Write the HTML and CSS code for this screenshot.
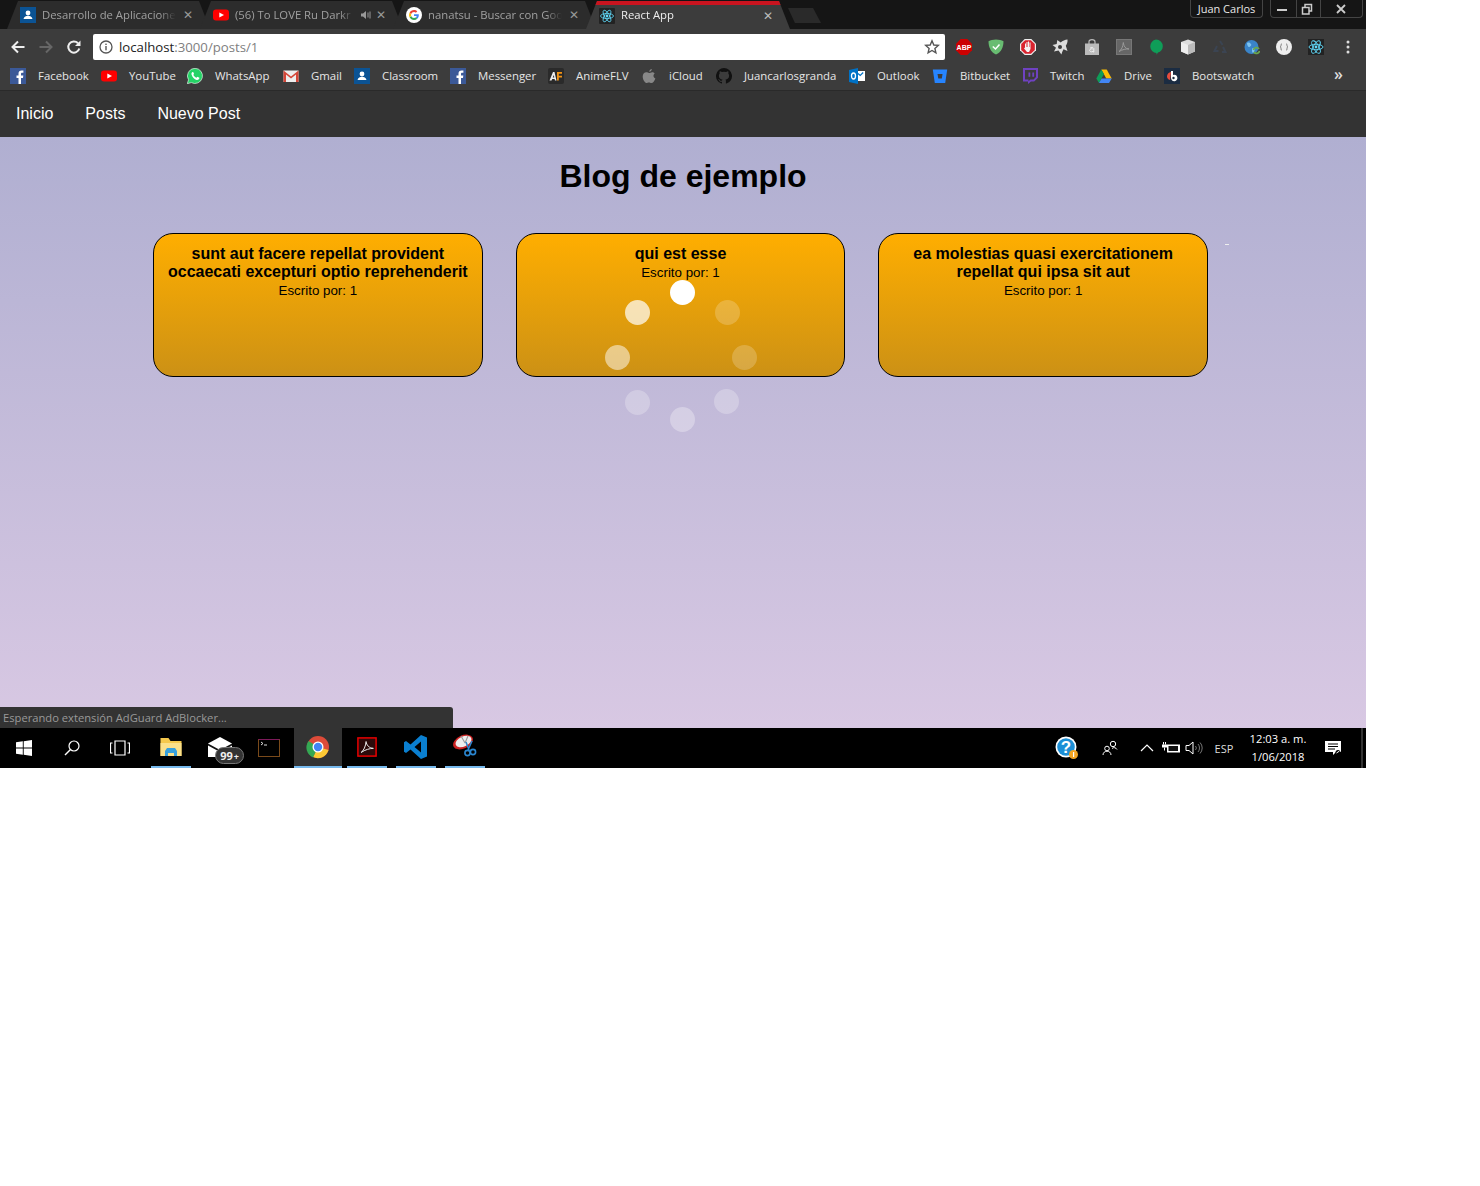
FILE: index.html
```html
<!DOCTYPE html>
<html lang="es">
<head>
<meta charset="utf-8">
<title>React App</title>
<link rel="stylesheet" href="styles.css">
</head>
<body>
<div class="screen">
  <header class="chrome">
    <div class="tabstrip">
      <div class="tabs">
        <div class="tab">
          <svg class="ico" viewBox="0 0 16 16"><rect width="16" height="16" fill="#0b5394"/><circle cx="8" cy="6" r="2.400" fill="#fff"/><path d="M3.500 12c.5-2.500 2.500-3.300 4.500-3.300s4 .8 4.500 3.300z" fill="#fff"/></svg>
          <span class="tab-title">Desarrollo de Aplicacione</span>
          <span class="tab-x">✕</span>
        </div>
        <div class="tab">
          <svg class="ico" viewBox="0 0 16 16"><rect y="2.500" width="16" height="11" rx="3" fill="#f00"/><path d="M6.300 5.500v5L11 8z" fill="#fff"/></svg>
          <span class="tab-title">(56) To LOVE Ru Darkr</span>
          <svg class="tab-sound" viewBox="0 0 12 12"><path d="M1 4.500h2L6 2v8L3 7.500H1z" fill="#999"/><path d="M8 3.500v5M10 2.500v7" stroke="#999" fill="none"/></svg>
          <span class="tab-x">✕</span>
        </div>
        <div class="tab">
          <svg class="ico" viewBox="0 0 16 16"><circle cx="8" cy="8" r="8" fill="#fff"/><path d="M12.800 8.200c0-.4 0-.7-.1-1H8v1.900h2.700c-.1.700-.5 1.200-1 1.500l1.600 1.200c.9-.9 1.500-2.100 1.500-3.600z" fill="#4285f4"/><path d="M8 13c1.300 0 2.400-.4 3.300-1.200l-1.600-1.200c-.4.300-1 .5-1.700.5-1.300 0-2.400-.9-2.800-2L3.600 10.300C4.400 11.900 6.100 13 8 13z" fill="#34a853"/><path d="M5.200 9.100c-.2-.7-.2-1.500 0-2.200L3.600 5.700c-.7 1.400-.7 3.200 0 4.600z" fill="#fbbc05"/><path d="M8 5c.7 0 1.400.3 1.900.7l1.400-1.400C10.400 3.500 9.300 3 8 3 6.100 3 4.400 4.100 3.600 5.700l1.600 1.200C5.600 5.800 6.700 5 8 5z" fill="#ea4335"/></svg>
          <span class="tab-title">nanatsu - Buscar con Goo</span>
          <span class="tab-x">✕</span>
        </div>
        <div class="tab tab-active">
          <svg class="ico" viewBox="0 0 16 16"><rect width="16" height="16" rx="1" fill="#222"/><circle cx="8" cy="8" r="1.400" fill="#61dafb"/><g fill="none" stroke="#61dafb" stroke-width=".8"><ellipse cx="8" cy="8" rx="6.500" ry="2.500"/><ellipse cx="8" cy="8" rx="6.500" ry="2.500" transform="rotate(60 8 8)"/><ellipse cx="8" cy="8" rx="6.500" ry="2.500" transform="rotate(120 8 8)"/></g></svg>
          <span class="tab-title">React App</span>
          <span class="tab-x">✕</span>
        </div>
        <div class="newtab"></div>
      </div>
      <div class="winbar">
        <div class="profile">Juan Carlos</div>
        <div class="winctl">
          <span class="wbtn"><svg viewBox="0 0 12 12" class="wico"><rect x="1" y="6" width="10" height="2" fill="#ccc"/></svg></span>
          <span class="wbtn wbtn-mid"><svg viewBox="0 0 12 12" class="wico"><path d="M1.500 4.500h6.500v6.500h-6.500zM4 4.500v-3h6.500v6.500h-2.500" fill="none" stroke="#ccc" stroke-width="1.500"/></svg></span>
          <span class="wbtn wbtn-close"><svg viewBox="0 0 12 12" class="wico"><path d="M2 2l8 8M10 2l-8 8" stroke="#ccc" stroke-width="1.800"/></svg></span>
        </div>
      </div>
    </div>

    <div class="toolbar">
      <svg class="navi" viewBox="0 0 16 16"><path d="M14.500 8H2.500M8 2.500L2.500 8 8 13.500" fill="none" stroke="#eee" stroke-width="2"/></svg>
      <svg class="navi" viewBox="0 0 16 16"><path d="M1.500 8h12M8 2.500L13.500 8 8 13.500" fill="none" stroke="#666" stroke-width="2"/></svg>
      <svg class="navi" viewBox="0 0 16 16"><path d="M13.300 9.500A5.600 5.600 0 1 1 12 4.200" fill="none" stroke="#eee" stroke-width="2"/><path d="M14.500 1.500v5.500H9z" fill="#eee"/></svg>
      <div class="omnibox">
        <svg class="info" viewBox="0 0 14 14"><circle cx="7" cy="7" r="6" fill="none" stroke="#555" stroke-width="1.300"/><rect x="6.300" y="6" width="1.400" height="4.300" fill="#555"/><rect x="6.300" y="3.600" width="1.400" height="1.400" fill="#555"/></svg>
        <span class="url"><span class="url-host">localhost</span><span class="url-rest">:3000/posts/1</span></span>
        <svg class="star" viewBox="0 0 16 16"><path d="M8 1.800l1.800 4.200 4.500.4-3.400 3 1 4.400L8 11.500l-3.900 2.300 1-4.400-3.400-3 4.500-.4z" fill="none" stroke="#555" stroke-width="1.400"/></svg>
      </div>
      <div class="exts">
        <span class="ext"><svg viewBox="0 0 16 16"><path d="M4.700 0h6.600L16 4.700v6.600L11.300 16H4.700L0 11.300V4.700z" fill="#c00"/><text x="8" y="10.700" class="abp">ABP</text></svg></span>
        <span class="ext"><svg viewBox="0 0 16 16"><path d="M8 .5C5 .5 2.500 1.200.5 2.300.5 8 2.500 13 8 15.500c5.500-2.500 7.500-7.500 7.500-13.200C13.500 1.200 11 .5 8 .5z" fill="#68bc71"/><path d="M4.800 7.500L7.500 10l4-4.500" fill="none" stroke="#fff" stroke-width="1.500"/></svg></span>
        <span class="ext"><svg viewBox="0 0 16 16"><path d="M4.700 0h6.600L16 4.700v6.600L11.300 16H4.700L0 11.300V4.700z" fill="#eee"/><path d="M5.100 1.200h5.800l3.900 3.900v5.800l-3.900 3.900H5.100l-3.900-3.900V5.100z" fill="#d9232e"/><path d="M5 8.500V4.500h1V8h.5V3h1v5H8V2.500h1V8h.5V3.500h1V10l-1.500 3H7L4 9.500l.7-.8z" fill="#f3f3f3"/></svg></span>
        <span class="ext"><svg viewBox="0 0 16 16"><path d="M15.500 .5c.3 2.700-.6 4.700-1.700 6.300l1.700 5.200-4-1.700c-.9 1.600-1.600 3.200-2.100 5.200L6.500 11.500l-4.500 1 2-3.700L.5 6l4.200-.9L5.300 1l3.400 2.400C10.700 1.700 13 .8 15.500 .5z" fill="#ddd"/><circle cx="8" cy="8" r="2" fill="#3c3c3c"/></svg></span>
        <span class="ext"><svg viewBox="0 0 16 16"><path d="M1 4.500h14v11.500H1z" fill="#bbb"/><path d="M5 5V2.800a3 2.200 0 0 1 6 0V5" fill="none" stroke="#bbb" stroke-width="1.200"/><path d="M6 9.200a2.100 1.300 0 0 1 3.800.3V13h-.8v-.6a2 1.500 0 1 1-.3-2.400" fill="none" stroke="#eee"/></svg></span>
        <span class="ext"><svg viewBox="0 0 16 16"><rect x=".5" y=".5" width="15" height="15" fill="#666" stroke="#777"/><path d="M3 12.500c2.500-1.500 4-5 4.300-9 .5 4 2 6.300 5.700 6.500-3-.3-6.500.5-10 2.500z" fill="none" stroke="#999"/></svg></span>
        <span class="ext"><svg viewBox="0 0 16 16"><path d="M8 .5a6.800 6.800 0 0 1 6.800 6.800c0 3.200-2 5.500-4.800 6.300l-1.500 2.200V14A6.800 6.800 0 0 1 8 .5z" fill="#0f9d58"/></svg></span>
        <span class="ext"><svg viewBox="0 0 16 16"><path d="M8 .5l7 2.500v9.500L8 15.500 1 12.500V3z" fill="#ddd"/><path d="M8 6L1 3v9.500l7 3z" fill="#eee"/><path d="M8 6l7-3v9.500l-7 3z" fill="#bbb"/></svg></span>
        <span class="ext"><svg viewBox="0 0 16 16"><path d="M8 2l2.500 4M5 7L2.500 12h4M10 13h3.500L11 8" fill="none" stroke="#3b4452" stroke-width="2"/></svg></span>
        <span class="ext"><svg viewBox="0 0 16 16"><circle cx="7.500" cy="8" r="7" fill="#3a84c9"/><path d="M3 4c2-1 3 0 4 1s-1 3-2 3-2-2-2-4zM9 9c2 0 2 2 1 4s-2 0-2-1 0-3 1-3z" fill="#7fc4f0"/><path d="M9.500 11a3 3 0 0 1 5.500-1M15.500 12a3 3 0 0 1-5.500 1" fill="none" stroke="#6aa84f" stroke-width="1.700"/></svg></span>
        <span class="ext"><svg viewBox="0 0 16 16"><circle cx="8" cy="8" r="8" fill="#eee"/><path d="M6 5c-1 0-1 .5-1 1.500S4 8 4 8s1 0 1 1.500.1 1.500 1 1.500M10 5c1 0 1 .5 1 1.500S12 8 12 8s-1 0-1 1.500-.1 1.500-1 1.500" fill="none" stroke="#777"/></svg></span>
        <span class="ext"><svg viewBox="0 0 16 16"><rect width="16" height="16" fill="#222"/><circle cx="8" cy="8" r="1.400" fill="#61dafb"/><g fill="none" stroke="#61dafb" stroke-width=".9"><ellipse cx="8" cy="8" rx="7" ry="2.700"/><ellipse cx="8" cy="8" rx="7" ry="2.700" transform="rotate(60 8 8)"/><ellipse cx="8" cy="8" rx="7" ry="2.700" transform="rotate(120 8 8)"/></g></svg></span>
        <span class="ext"><svg viewBox="0 0 16 16"><circle cx="8" cy="3" r="1.500" fill="#ddd"/><circle cx="8" cy="8" r="1.500" fill="#ddd"/><circle cx="8" cy="13" r="1.500" fill="#ddd"/></svg></span>
      </div>
    </div>

    <div class="bookmarks">
      <a class="bm"><svg viewBox="0 0 16 16"><rect width="16" height="16" fill="#3b5998"/><path d="M11 16V10h2l.3-2.500H11V6c0-.8.300-1.200 1.200-1.200h1.200V2.600c-.6-.1-1.200-.1-1.800-.1-1.900 0-3.100 1.100-3.100 3.200v1.800H6.500V10h2v6z" fill="#fff"/></svg><span>Facebook</span></a>
      <a class="bm"><svg viewBox="0 0 16 16"><rect y="2.500" width="16" height="11" rx="3" fill="#f00"/><path d="M6.300 5.500v5L11 8z" fill="#fff"/></svg><span>YouTube</span></a>
      <a class="bm"><svg viewBox="0 0 16 16"><path d="M8 .3a7.600 7.600 0 0 0-6.500 11.500L.3 15.700l4-1.100A7.600 7.600 0 1 0 8 .3z" fill="#25d366" stroke="#fff" stroke-width=".6"/><path d="M5.500 4c-.8.500-1.300 1.500-.9 2.800.7 2.400 2.700 4.500 5 5.100 1.300.3 2.400-.3 2.700-1.300l.1-.8-2-1-.9 1C8 9.300 6.900 8.200 6.300 6.800l.8-.9-.9-2z" fill="#fff"/></svg><span>WhatsApp</span></a>
      <a class="bm"><svg viewBox="0 0 16 16"><rect x=".5" y="2.500" width="15" height="11.500" fill="#eee"/><path d="M.5 2.500L8 8.500l7.500-6V14h-2.500V6.500L8 10.500 3 6.500V14H.5z" fill="#d44638"/></svg><span>Gmail</span></a>
      <a class="bm"><svg viewBox="0 0 16 16"><rect width="16" height="16" fill="#0b5394"/><circle cx="8" cy="6" r="2.400" fill="#fff"/><path d="M3.500 12c.5-2.500 2.500-3.300 4.500-3.300s4 .8 4.500 3.300z" fill="#fff"/></svg><span>Classroom</span></a>
      <a class="bm"><svg viewBox="0 0 16 16"><rect width="16" height="16" fill="#3b5998"/><path d="M11 16V10h2l.3-2.500H11V6c0-.8.300-1.200 1.200-1.200h1.200V2.600c-.6-.1-1.200-.1-1.800-.1-1.900 0-3.100 1.100-3.100 3.200v1.800H6.500V10h2v6z" fill="#fff"/></svg><span>Messenger</span></a>
      <a class="bm"><svg viewBox="0 0 16 16"><rect width="16" height="16" rx="2" fill="#2a2a2a"/><path d="M1.500 12.500L5 4h1.500l2 8.500H7L6.600 11H4.200l-.6 1.500zM4.700 9.500h1.600L5.800 7z" fill="#eee"/><path d="M9 4h5v1.800h-3.200v2H14v1.700h-3.200v3H9z" fill="#f29314"/></svg><span>AnimeFLV</span></a>
      <a class="bm"><svg viewBox="0 0 16 16"><path d="M10.800 1c.1 1.400-1.100 2.800-2.500 2.700C8.100 2.400 9.500 1.100 10.800 1zM13.700 5.500c-1.900 1.300-1.500 4.100.7 5-1 2.400-2.300 4.500-4 4.500-1 0-1.400-.6-2.500-.6s-1.600.6-2.500.6C3.700 15 1.700 11.400 1.700 8.600c0-2.800 1.800-4.300 3.600-4.300 1.100 0 2 .7 2.800.7s1.800-.8 3.100-.8c1 0 1.900.5 2.500 1.300z" fill="#888"/></svg><span>iCloud</span></a>
      <a class="bm"><svg viewBox="0 0 16 16"><path d="M8 0a8 8 0 0 0-2.500 15.600c.4.100.5-.2.500-.4v-1.400c-2.200.5-2.700-1-2.700-1-.4-.9-.9-1.200-.9-1.200-.7-.5.100-.5.100-.5.800.1 1.200.8 1.200.8.700 1.200 1.900.9 2.300.7.100-.5.300-.9.500-1.100-1.800-.2-3.600-.9-3.600-4 0-.9.300-1.600.8-2.100-.1-.2-.4-1 .1-2.100 0 0 .7-.2 2.200.8a7.600 7.600 0 0 1 4 0c1.500-1 2.200-.8 2.200-.8.400 1.100.2 1.900.1 2.100.5.600.8 1.300.8 2.100 0 3.100-1.900 3.800-3.700 4 .3.300.5.800.5 1.500v2.200c0 .2.100.5.600.4A8 8 0 0 0 8 0z" fill="#111"/></svg><span>Juancarlosgranda</span></a>
      <a class="bm"><svg viewBox="0 0 16 16"><rect x="7" y="3" width="9" height="10" fill="#fff"/><path d="M9 5.500l2.200 2 3-3" fill="none" stroke="#0072c6" stroke-width="1.200"/><path d="M0 2l9-2v16L0 14z" fill="#0072c6"/><ellipse cx="4.500" cy="8" rx="2" ry="3" fill="none" stroke="#fff" stroke-width="1.300"/></svg><span>Outlook</span></a>
      <a class="bm"><svg viewBox="0 0 16 16"><path d="M.8 1.500h14.400L13.200 15H2.800z" fill="#2684ff"/><path d="M5.500 6h5l-.7 4.500H6.300z" fill="#3c3c3c"/></svg><span>Bitbucket</span></a>
      <a class="bm"><svg viewBox="0 0 16 16"><path d="M1 0h15v9.800L12.200 13.500H9L6 16v-2.500H1z" fill="#6f42c1"/><path d="M3 2h11v7l-2.500 2.500H8.300L6.500 13.200v-1.700H3z" fill="#3c3c3c"/><path d="M6.500 4.500h1.800v4.300H6.500zM10.300 4.500h1.800v4.300h-1.800z" fill="#6f42c1"/></svg><span>Twitch</span></a>
      <a class="bm"><svg viewBox="0 0 16 16"><path d="M5.300 1.500h5.400l5 9h-5.400z" fill="#fbbc05"/><path d="M5.300 1.500L.3 10.500l2.700 4.500 5-9z" fill="#0f9d58"/><path d="M3 15h10l2.700-4.500H5.600z" fill="#4285f4"/></svg><span>Drive</span></a>
      <a class="bm"><svg viewBox="0 0 16 16"><rect width="16" height="16" fill="#1b2c42"/><path d="M3 8a5 5 0 0 1 4-4l-1 8a4 4 0 0 1-3-4z" fill="#e74c3c"/><path d="M7 3h2v4a3.200 3.200 0 1 1-2 3z" fill="#fff"/><circle cx="9.500" cy="10" r="1.200" fill="#1b2c42"/></svg><span>Bootswatch</span></a>
      <span class="bm-more">»</span>
    </div>
  </header>

  <nav class="appnav">
    <a class="navlink">Inicio</a>
    <a class="navlink">Posts</a>
    <a class="navlink">Nuevo Post</a>
  </nav>

  <main class="page">
    <h1 class="page-title">Blog de ejemplo</h1>
    <section class="cards">
      <article class="card">
        <h2 class="card-title">sunt aut facere repellat provident occaecati excepturi optio reprehenderit</h2>
        <p class="card-by">Escrito por: 1</p>
      </article>
      <article class="card">
        <h2 class="card-title">qui est esse</h2>
        <p class="card-by">Escrito por: 1</p>
      </article>
      <article class="card">
        <h2 class="card-title">ea molestias quasi exercitationem repellat qui ipsa sit aut</h2>
        <p class="card-by">Escrito por: 1</p>
      </article>
    </section>
    <div class="speck"></div>
    <div class="spinner">
      <i class="dot d1"></i><i class="dot d2"></i><i class="dot d3"></i><i class="dot d4"></i>
      <i class="dot d5"></i><i class="dot d6"></i><i class="dot d7"></i><i class="dot d8"></i>
    </div>
    <div class="status">Esperando extensión AdGuard AdBlocker...</div>
  </main>

  <footer class="taskbar">
    <div class="task-left">
      <span class="tb tb-48"><svg viewBox="0 0 16 16" class="tbi16"><path d="M0 2.300l6.800-1v6.300H0zM7.700 1.200L16 0v7.600H7.700zM0 8.500h6.800v6.300L0 13.800zM7.700 8.500H16V16l-8.300-1.200z" fill="#fff"/></svg></span>
      <span class="tb tb-48"><svg viewBox="0 0 16 16" class="tbi16"><circle cx="10" cy="6" r="5" fill="none" stroke="#fff" stroke-width="1.200"/><path d="M6.500 9.500L1 15" stroke="#fff" stroke-width="1.400"/></svg></span>
      <span class="tb tb-48"><svg viewBox="0 0 20 16" class="tbi20"><path d="M5 1h10v14H5zM2.500 3H.5v10h2M17.500 3h2v10h-2" fill="none" stroke="#fff" stroke-width="1.200"/></svg></span>
      <span class="tb tb-40 tb-open tb-explorer"><svg viewBox="0 0 22 20" class="tbi22"><path d="M.5 1h8l2 3h11v15H.5z" fill="#f5c84c"/><path d="M.5 6h21v13H.5z" fill="#fbe08a"/><path d="M5 19v-5l2-3h8l2 3v5h-3v-3H8v3z" fill="#38a0dc"/></svg></span>
      <span class="tb tb-mail"><svg viewBox="0 0 24 20" class="tbi-mail"><path d="M0 6.500L12 0l12 6.500V20H0z" fill="#fff"/><path d="M0 6.500l12 6.500 12-6.500v2L12 15 0 8.500z" fill="#111"/></svg><span class="badge">99<small>+</small></span></span>
      <span class="tb tb-term"><svg viewBox="0 0 22 18" class="tbi22"><rect x=".5" y=".5" width="21" height="17" fill="#000" stroke="#7a4a1a"/><path d="M.5 .5h21" stroke="#7d1a5a"/><path d="M3 3l2 1.500-2 1.500M6 6h3" stroke="#ddd" fill="none"/></svg></span>
      <span class="tb tb-48 tb-active"><svg viewBox="0 0 24 24" class="tbi24"><circle cx="12" cy="12" r="11" fill="#dd4b39"/><path d="M12 12L22.500 15A11 11 0 0 1 7 22z" fill="#fcc934"/><path d="M12 12L7 22.500A11 11 0 0 1 2.500 6z" fill="#34a853"/><circle cx="12" cy="12" r="5.500" fill="#fff"/><circle cx="12" cy="12" r="4.200" fill="#4285f4"/></svg></span>
      <span class="tb tb-40 tb-open tb-acro"><svg viewBox="0 0 22 22" class="tbi22"><rect x="1" y="1" width="20" height="20" fill="#2b0a0a" stroke="#e00" stroke-width="1.600"/><path d="M4.500 17c3-2 5-7 5.500-12 .5 4 3 7 8 7.500-4 0-9 1.500-13.500 4.500z" fill="none" stroke="#eee" stroke-width="1.100"/></svg></span>
      <span class="tb tb-40 tb-open tb-code"><svg viewBox="0 0 24 24" class="tbi24"><path d="M17 0l6 2.500v19L17 24 6.500 14.500 2 18l-2-1.200V7.200L2 6l4.500 3.500zM17 6.500L10.500 12l6.500 5.500z" fill="#0a7fd0"/></svg></span>
      <span class="tb tb-40 tb-open tb-snip"><svg viewBox="0 0 26 24" class="tbi-snip"><ellipse cx="11" cy="9" rx="10.500" ry="6.500" fill="#c22" transform="rotate(-25 11 9)"/><ellipse cx="11.500" cy="8.500" rx="8.500" ry="5" fill="#eee" transform="rotate(-25 11.500 8.500)"/><path d="M9 3l4 7M16 3l-3 7" stroke="#999" stroke-width="1.100"/><path d="M14 9l3 8M20 8l-4 9" stroke="#2a86d0" stroke-width="1.500"/><circle cx="15.500" cy="20" r="2.600" fill="none" stroke="#2a86d0" stroke-width="1.600"/><circle cx="21" cy="19" r="2.600" fill="none" stroke="#2a86d0" stroke-width="1.600"/></svg></span>
    </div>
    <div class="tray">
      <span class="tr tr-help"><svg viewBox="0 0 24 24" class="tri22"><circle cx="11" cy="11" r="10.500" fill="#fff"/><circle cx="11" cy="11" r="8.800" fill="#1c8fd6"/><text x="11" y="17" class="qmark">?</text><circle cx="18.500" cy="18.500" r="4.500" fill="#f5a623"/><rect x="18" y="16" width="1.200" height="5" fill="#fff"/></svg></span>
      <span class="tr tr-people"><svg viewBox="0 0 16 16" class="tri16"><circle cx="11" cy="4" r="2.700" fill="none" stroke="#fff"/><circle cx="5" cy="8.500" r="2.300" fill="none" stroke="#fff"/><path d="M1 15c0-2.500 2-3.800 4-3.800s4 1.300 4 3.800M10 8.500c1.500-1.500 4-1 5 1" fill="none" stroke="#fff"/></svg></span>
      <span class="tr tr-up"><svg viewBox="0 0 14 8" class="tri-up"><path d="M1 7l6-6 6 6" fill="none" stroke="#fff" stroke-width="1.200"/></svg></span>
      <span class="tr tr-batt"><svg viewBox="0 0 18 14" class="tri18"><rect x="5" y="3.500" width="13" height="8" fill="#fff"/><rect x="6.500" y="5" width="9.500" height="5" fill="#111"/><path d="M1.500 1v2.500M3.500 1v2.500" stroke="#fff"/><path d="M0 3.500h5v3H0z" fill="#fff"/><path d="M2.500 6.500v3" stroke="#fff"/></svg></span>
      <span class="tr tr-vol"><svg viewBox="0 0 18 14" class="tri18"><path d="M1 4.500h3L8 1v12L4 9.500H1z" fill="none" stroke="#fff"/><path d="M10.500 5a3 3 0 0 1 0 4M13 3a6 6 0 0 1 0 8M15 1.500a8 8 0 0 1 0 11" fill="none" stroke="#777"/></svg></span>
      <span class="tr-lang">ESP</span>
      <span class="tr-clock"><span>12:03 a. m.</span><span>1/06/2018</span></span>
      <span class="tr tr-notif"><svg viewBox="0 0 16 16" class="tri16"><path d="M0 1h16v11h-5l-3 3v-3H0z" fill="#fff"/><path d="M3 4h10M3 6.500h10M3 9h7" stroke="#000"/><circle cx="13" cy="12.500" r="2.500" fill="#000"/><path d="M11.500 13l3-2" stroke="#fff"/></svg></span>
      <span class="tr-peek"></span>
    </div>
  </footer>
</div>
</body>
</html>
```

FILE: styles.css
```css
* { box-sizing: border-box; }
html, body { margin: 0; padding: 0; background: #fff; }
svg { display: block; }
.screen { width: 1366px; height: 768px; display: flex; flex-direction: column; font-family: "Open Sans", "Liberation Sans", sans-serif; overflow: hidden; }

/* Browser frame */
.chrome { background: #3c3c3c; color: #eee; }
.tabstrip { height: 29px; background: #151515; display: flex; justify-content: space-between; }
.tabs { display: flex; padding: 1px 0 0 7px; }
.tab { width: 203px; height: 28px; margin-right: -10px; padding: 0 16px 0 13px; background: #2c2c2c; display: flex; align-items: center; color: #a0a0a0; font-size: 11.3px; clip-path: polygon(0 100%, 11px 0, calc(100% - 11px) 0, 100% 100%); position: relative; }
.tab-active { background: #3c3c3c; color: #eee; width: 204px; border-top: 4px solid #c9141f; padding-bottom: 3px; z-index: 2; }
.ico { width: 16px; height: 16px; flex: none; margin-right: 6px; }
.tab-title { flex: 1; min-width: 0; margin-right: 6px; padding-bottom: 2px; white-space: nowrap; overflow: hidden; -webkit-mask-image: linear-gradient(to right, #000 88%, transparent); mask-image: linear-gradient(to right, #000 88%, transparent); }
.tab-sound { width: 12px; height: 12px; flex: none; margin-right: 3px; }
.tab-x { font-size: 12px; line-height: 12px; color: #999; width: 12px; text-align: center; flex: none; font-family: "DejaVu Sans", sans-serif; }
.tab-active .tab-x { color: #bbb; }
.newtab { width: 33px; height: 15px; margin: 7px 0 0 8px; background: #2a2a2a; clip-path: polygon(0 0, 76% 0, 100% 100%, 21% 100%); }
.winbar { display: flex; align-items: flex-start; padding-right: 3px; gap: 7px; }
.profile { width: 73px; height: 18px; border: 1px solid #444; border-top: 0; border-radius: 0 0 4px 4px; font-size: 11px; color: #e8e8e8; display: flex; align-items: center; justify-content: center; }
.winctl { display: flex; height: 18px; border: 1px solid #444; border-top: 0; border-radius: 0 0 4px 4px; }
.wbtn { width: 25px; padding-right: 3px; display: flex; align-items: center; justify-content: center; }
.wbtn-mid { border-left: 1px solid #444; border-right: 1px solid #444; }
.wbtn-close { width: 41px; padding-right: 2px; }
.wico { width: 12px; height: 12px; }

.toolbar { height: 33px; display: flex; align-items: center; padding: 3px 0 0 10px; }
.navi { width: 16px; height: 16px; margin-right: 12px; flex: none; }
.omnibox { flex: none; width: 852px; height: 26px; margin-left: -1px; background: #fff; border-radius: 2px; display: flex; align-items: center; padding: 0 5px 0 6px; color: #222; }
.info { width: 14px; height: 14px; flex: none; margin-right: 6px; }
.url { flex: 1; font-size: 13.2px; }
.url-host { color: #222; }
.url-rest { color: #808080; }
.star { width: 16px; height: 16px; flex: none; }
.exts { display: flex; flex: none; margin-left: 3px; }
.ext { width: 32px; display: flex; justify-content: center; }
.ext svg { width: 16px; height: 16px; }
.abp { font: bold 7px "Liberation Sans", sans-serif; fill: #fff; text-anchor: middle; }

.bookmarks { height: 28px; display: grid; align-items: center; padding-left: 10px; position: relative; grid-template-columns: 91px 86px 96px 71px 96px 98px 93px 75px 133px 83px 90px 74px 68px 150px 1fr; }
.bm { display: flex; align-items: center; gap: 12px; font-size: 11.4px; color: #e6e6e6; white-space: nowrap; }
.bm span { padding-bottom: 2px; }
.bm svg { width: 16px; height: 16px; flex: none; }
.bm-more { position: absolute; left: 1334px; top: 1px; font-size: 16px; font-weight: 600; color: #ddd; }

/* App nav */
.appnav { height: 47px; background: #333; border-top: 1px solid #2a2a2a; display: flex; align-items: center; font-family: "Liberation Sans", sans-serif; }
.navlink { padding: 0 16px; font-size: 16px; color: #fff; }

/* Page */
.page { position: relative; flex: 1; min-height: 0; background: linear-gradient(#b0afd1, #d8c8e3); font-family: "Liberation Sans", sans-serif; color: #000; }
.page-title { margin: 0; padding-top: 21px; height: 96px; font-size: 32px; line-height: 37px; font-weight: 700; text-align: center; }
.cards { margin-left: 153px; width: 1055px; display: grid; grid-template-columns: repeat(3, 1fr); gap: 33px; }
.card { height: 144px; padding: 11px 12px; border: 1px solid #000; border-radius: 20px; background: linear-gradient(#ffae00, #cc9115); text-align: center; }
.card-title { margin: 0; font-size: 16px; line-height: 18px; font-weight: 700; }
.card-by { margin: 0; font-size: 13.33px; line-height: 19px; }
.speck { position: absolute; left: 1225px; top: 107px; width: 4px; height: 1px; background: #eee; }
.spinner { position: absolute; left: 0; top: 0; width: 100%; height: 100%; }
.dot { position: absolute; width: 25px; height: 25px; border-radius: 50%; background: #fff; }
.d1 { left: 670px; top: 143px; }
.d2 { left: 715px; top: 163px; opacity: .2; }
.d3 { left: 732px; top: 208px; opacity: .2; }
.d4 { left: 714px; top: 252px; opacity: .25; }
.d5 { left: 670px; top: 270px; opacity: .3; }
.d6 { left: 625px; top: 253px; opacity: .25; }
.d7 { left: 605px; top: 208px; opacity: .5; }
.d8 { left: 625px; top: 163px; opacity: .7; }
.status { position: absolute; left: 0; bottom: 0; width: 453px; height: 21px; padding: 0 3px; background: #333; border-radius: 0 3px 0 0; color: #999; font-family: "Open Sans", sans-serif; font-size: 11.2px; line-height: 21px; }

/* Taskbar */
.taskbar { height: 40px; background: #000; display: flex; justify-content: space-between; color: #fff; }
.task-left { display: flex; }
.tb { height: 40px; display: flex; align-items: center; justify-content: center; flex: none; position: relative; }
.tb-48 { width: 48px; }
.tb-40 { width: 40px; }
.tb-open { border-bottom: 2px solid #76b9ed; }
.tb-explorer { margin-left: 7px; margin-right: 5px; }
.tb-mail { width: 48px; }
.tb-term { width: 48px; margin-left: 1px; }
.tb-active { background: #333; border-bottom: 2px solid #76b9ed; margin: 0 1px; }
.tb-acro { margin: 0 4px; }
.tb-code { margin: 0 5px; }
.tb-snip { margin: 0 4px; }
.tbi16 { width: 16px; height: 16px; }
.tbi20 { width: 20px; height: 16px; }
.tbi22 { width: 22px; height: 20px; }
.tbi24 { width: 24px; height: 24px; }
.tbi-mail { width: 24px; height: 20px; margin-top: -3px; }
.tbi-snip { width: 26px; height: 24px; margin-top: -4px; }
.badge { position: absolute; left: 19px; top: 19px; width: 29px; height: 17px; border: 1px solid #777; border-radius: 9px; background: #333; color: #eee; font: bold 11px/15px "Open Sans", sans-serif; text-align: center; }
.badge small { font-size: 9px; margin-left: 1px; }
.tray { display: flex; align-items: center; font-size: 11.5px; }
.tr { display: flex; justify-content: center; }
.tr-help { width: 26px; margin-right: 22px; }
.tr-people { width: 16px; margin-right: 22px; }
.tr-up { width: 14px; margin-right: 8px; }
.tr-batt { width: 18px; margin-right: 5px; }
.tr-vol { width: 18px; margin-right: 9px; }
.tri22 { width: 24px; height: 24px; }
.tri16 { width: 16px; height: 16px; }
.tri18 { width: 18px; height: 14px; }
.tri-up { width: 14px; height: 8px; }
.qmark { font: bold 17px "Liberation Sans", sans-serif; fill: #fff; text-anchor: middle; }
.tr-lang { width: 24px; margin-right: 7px; color: #ddd; font-size: 11px; text-align: center; }
.tr-clock { width: 70px; display: flex; flex-direction: column; align-items: center; line-height: 18px; font-size: 11.2px; margin-right: 12px; }
.tr-notif { width: 16px; margin-right: 20px; }
.tr-peek { width: 2px; height: 40px; margin-right: 3px; background: #333; }
```
